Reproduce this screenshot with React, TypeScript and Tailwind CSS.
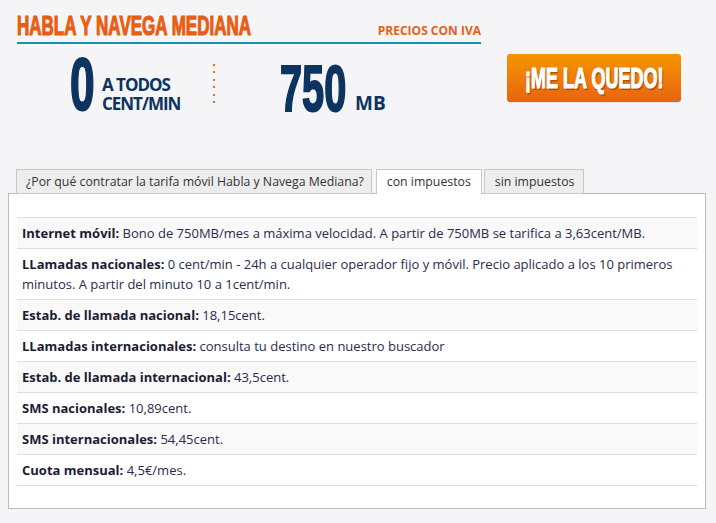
import React from 'react'

const ROWS: { label: string; value: string }[] = [
  { label: 'Internet móvil:', value: 'Bono de 750MB/mes a máxima velocidad. A partir de 750MB se tarifica a 3,63cent/MB.' },
  { label: 'LLamadas nacionales:', value: '0 cent/min - 24h a cualquier operador fijo y móvil. Precio aplicado a los 10 primeros minutos. A partir del minuto 10 a 1cent/min.' },
  { label: 'Estab. de llamada nacional:', value: '18,15cent.' },
  { label: 'LLamadas internacionales:', value: 'consulta tu destino en nuestro buscador' },
  { label: 'Estab. de llamada internacional:', value: '43,5cent.' },
  { label: 'SMS nacionales:', value: '10,89cent.' },
  { label: 'SMS internacionales:', value: '54,45cent.' },
  { label: 'Cuota mensual:', value: '4,5€/mes.' },
]

// condensed display face: Liberation Sans Bold squeezed horizontally
const display = "font-['Liberation_Sans',Arial,sans-serif] font-bold whitespace-nowrap"

export default function App() {
  return (
    <div className="min-h-[523px] w-[716px] bg-[#f5f5f7] font-['Open_Sans',sans-serif]">
      <div className="flex pl-[17px]">
        <div className="w-[464px]">
          {/* title bar */}
          <div className="flex h-[44px] items-end justify-between border-b-2 border-[#1a8fae]">
            <div className="mb-[2px] flex w-[240px]">
              <h1 className={`${display} origin-left scale-x-[0.63] text-[27px] leading-[28px] text-[#e85d12] [-webkit-text-stroke:1.2px_#e85d12]`}>
                HABLA Y NAVEGA MEDIANA
              </h1>
            </div>
            <span className="mb-[5px] whitespace-nowrap text-[12px] leading-[12px] font-bold text-[#e85f19]">PRECIOS CON IVA</span>
          </div>

          {/* tariff figures */}
          <div className="flex h-[70px] items-end text-[#0d3461]">
            <div className="ml-[53px] flex w-[32px]">
              <span className={`${display} origin-left scale-x-[0.6] text-[74px] leading-[58px] [-webkit-text-stroke:2px_#0d3461]`}>0</span>
            </div>
            <div className="mb-[1px] w-[111px] tracking-[-0.06em] text-[17px] leading-[19px] font-bold">
              <div>A TODOS</div>
              <div>CENT/MIN</div>
            </div>
            <div className="mb-[6px] h-[44px] w-[2px] bg-[repeating-linear-gradient(to_bottom,#f26b1d_0_2px,transparent_2px_7.5px)]" />
            <div className="ml-[65px] flex w-[75px]">
              <span className={`${display} origin-left scale-x-[0.62] text-[64px] leading-[50px] [-webkit-text-stroke:2px_#0d3461]`}>750</span>
            </div>
            <span className="mb-[1px] text-[19px] leading-[19px] font-bold">MB</span>
          </div>
        </div>

        <div className="ml-[26px] mt-[54px]">
          <button className="flex h-[48px] w-[174px] items-center justify-center rounded-[3px] bg-gradient-to-b from-[#f49500] to-[#e8630f] text-white shadow-[0_1px_1px_rgba(0,0,0,0.08)]">
            <span className={`${display} inline-block scale-x-[0.6] text-[30px] leading-[30px] [-webkit-text-stroke:1.2px_#fff] [text-shadow:2px_2px_1px_rgba(110,45,0,0.55)]`}>¡ME LA QUEDO!</span>
          </button>
        </div>
      </div>

      {/* tabs + panel */}
      <div className="mt-[55px] px-[8px] text-[13px]">
        <div className="relative z-10 ml-[8px] flex text-[12.3px] text-[#333]">
          <div className="h-[25px] border border-[#c9c9c9] bg-[#ededed] pl-[9px] pr-[7px] leading-[23px] whitespace-nowrap">¿Por qué contratar la tarifa móvil Habla y Navega Mediana?</div>
          <div className="ml-[4px] h-[25px] border border-b-0 border-[#c9c9c9] bg-white px-[10px] leading-[23px] whitespace-nowrap">con impuestos</div>
          <div className="ml-[2px] h-[25px] border border-[#c9c9c9] bg-[#ededed] pl-[10px] pr-[9px] leading-[23px] whitespace-nowrap">sin impuestos</div>
        </div>
        <div className="-mt-[1px] w-[698px] border border-[#bcbcbc] bg-white px-[8px] pt-[23px] pb-[22px]">
          <div className="border-b border-[#dedede]">
            {ROWS.map((row, i) => (
              <div key={row.label} className={`border-t border-[#dedede] px-[5px] py-[5px] leading-[20px] text-[#2b2b4b] ${i % 2 === 0 ? 'bg-[#f9f9f9]' : 'bg-white'}`}>
                <b className="font-bold text-[#1c1c33]">{row.label}</b> {row.value}
              </div>
            ))}
          </div>
        </div>
      </div>
    </div>
  )
}
